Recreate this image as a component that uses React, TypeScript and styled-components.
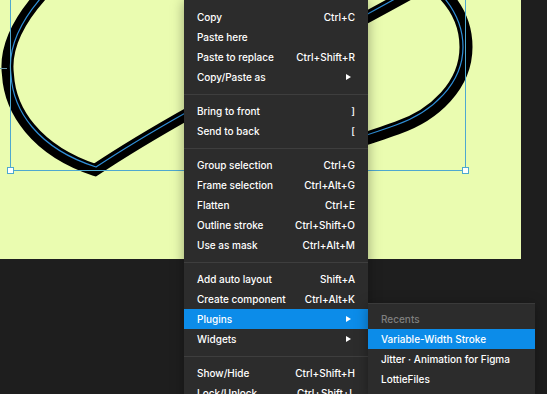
import * as React from "react"
import styled, { createGlobalStyle } from "styled-components"

type Entry = {
  label: string
  shortcut?: string
  submenu?: boolean
  active?: boolean
}

const sections: Entry[][] = [
  [
    { label: "Copy", shortcut: "Ctrl+C" },
    { label: "Paste here" },
    { label: "Paste to replace", shortcut: "Ctrl+Shift+R" },
    { label: "Copy/Paste as", submenu: true },
  ],
  [
    { label: "Bring to front", shortcut: "]" },
    { label: "Send to back", shortcut: "[" },
  ],
  [
    { label: "Group selection", shortcut: "Ctrl+G" },
    { label: "Frame selection", shortcut: "Ctrl+Alt+G" },
    { label: "Flatten", shortcut: "Ctrl+E" },
    { label: "Outline stroke", shortcut: "Ctrl+Shift+O" },
    { label: "Use as mask", shortcut: "Ctrl+Alt+M" },
  ],
  [
    { label: "Add auto layout", shortcut: "Shift+A" },
    { label: "Create component", shortcut: "Ctrl+Alt+K" },
    { label: "Plugins", submenu: true, active: true },
    { label: "Widgets", submenu: true },
  ],
  [
    { label: "Show/Hide", shortcut: "Ctrl+Shift+H" },
    { label: "Lock/Unlock", shortcut: "Ctrl+Shift+L" },
  ],
]

const plugins = [
  { label: "Variable-Width Stroke", active: true },
  { label: "Jitter · Animation for Figma" },
  { label: "LottieFiles" },
]

const GlobalStyle = createGlobalStyle`
  html, body {
    margin: 0;
    padding: 0;
    background: #1e1e1e;
    overflow: hidden;
  }
  body {
    font-family: Inter, "Noto Sans", sans-serif;
    -webkit-font-smoothing: antialiased;
  }
`

const Canvas = styled.div`
  position: relative;
  width: 547px;
  height: 394px;
  overflow: hidden;
  background: #1e1e1e;
`

const Frame = styled.div`
  width: 521px;
  height: 259px;
  background: #eafcb0;
`

const Drawing = styled.svg`
  display: block;
`

const Menu = styled.div`
  position: absolute;
  left: 184px;
  top: -1px;
  width: 184px;
  padding: 8px 0;
  background: #2c2c2c;
  box-shadow: 0 2px 12px rgba(0, 0, 0, 0.35);
`

const Item = styled.div<{ $active?: boolean }>`
  position: relative;
  display: flex;
  align-items: center;
  justify-content: space-between;
  height: 20px;
  padding: 0 13px;
  color: #ffffff;
  font-size: 10px;
  font-weight: 500;
  line-height: 20px;
  white-space: nowrap;
  background: ${props => (props.$active ? "#0c8ce9" : "transparent")};
`

const Shortcut = styled.span`
  color: #ffffff;
`

const Arrow = styled.span`
  width: 0;
  height: 0;
  margin-right: 4px;
  border-top: 3.5px solid transparent;
  border-bottom: 3.5px solid transparent;
  border-left: 5px solid #ffffff;
`

const Separator = styled.div`
  height: 1px;
  margin: 7px 0 6px;
  background: #3e3e3e;
`

const Submenu = styled.div`
  position: absolute;
  left: 100%;
  top: -6px;
  width: 167px;
  padding: 5px 0 8px;
  background: #2c2c2c;
  border-top: 1px solid #3a3a3a;
  box-shadow: 0 2px 12px rgba(0, 0, 0, 0.35);
`

const SubHeading = styled(Item)`
  color: #7f7f7f;
`

const ShapeDrawing = () => (
  <Drawing width="521" height="259" viewBox="0 0 521 259">
    <g fill="none" strokeLinejoin="miter" strokeMiterlimit={6}>
      <path
        d="M 48 -12 C 22 15, 4 45, 8 75 C 10 110, 35 150, 95 170 C 185 110, 300 55, 420 -12"
        stroke="#000"
        strokeWidth={12}
      />
      <path
        d="M 440 -10 C 456 5, 466 25, 466 47 C 466 85, 435 115, 397 128 C 375 136, 355 142, 330 150"
        stroke="#000"
        strokeWidth={13}
      />
      <path
        d="M 50 -12 C 24 15, 7 45, 11 75 C 13 110, 37 148, 96 167 C 185 108, 300 53, 418 -14"
        stroke="#2f8fd8"
        strokeWidth={1.2}
      />
      <path
        d="M 437 -10 C 452 5, 463 25, 463 47 C 463 83, 433 112, 396 125 C 374 133, 354 139, 330 147"
        stroke="#2f8fd8"
        strokeWidth={1.2}
      />
    </g>
    <g stroke="#4ea8cf" strokeWidth={1} fill="none">
      <line x1="10.5" y1="0" x2="10.5" y2="170.5" />
      <line x1="465.5" y1="0" x2="465.5" y2="170.5" />
      <line x1="10.5" y1="170.5" x2="465.5" y2="170.5" />
      <line x1="0" y1="68.5" x2="7" y2="68.5" stroke="#6a98ac" />
    </g>
    <g fill="#ffffff" stroke="#4ea8cf" strokeWidth={1}>
      <rect x="7.5" y="167.5" width="6" height="6" />
      <rect x="462.5" y="167.5" width="6" height="6" />
    </g>
  </Drawing>
)

export default function App() {
  return (
    <Canvas>
      <GlobalStyle />
      <Frame>
        <ShapeDrawing />
      </Frame>
      <Menu>
        {sections.map((section, i) => (
          <React.Fragment key={i}>
            {i > 0 && <Separator />}
            {section.map(entry => (
              <Item key={entry.label} $active={entry.active}>
                <span>{entry.label}</span>
                {entry.shortcut && <Shortcut>{entry.shortcut}</Shortcut>}
                {entry.submenu && <Arrow />}
                {entry.active && (
                  <Submenu>
                    <SubHeading>Recents</SubHeading>
                    {plugins.map(p => (
                      <Item key={p.label} $active={p.active}>
                        <span>{p.label}</span>
                      </Item>
                    ))}
                  </Submenu>
                )}
              </Item>
            ))}
          </React.Fragment>
        ))}
      </Menu>
    </Canvas>
  )
}
